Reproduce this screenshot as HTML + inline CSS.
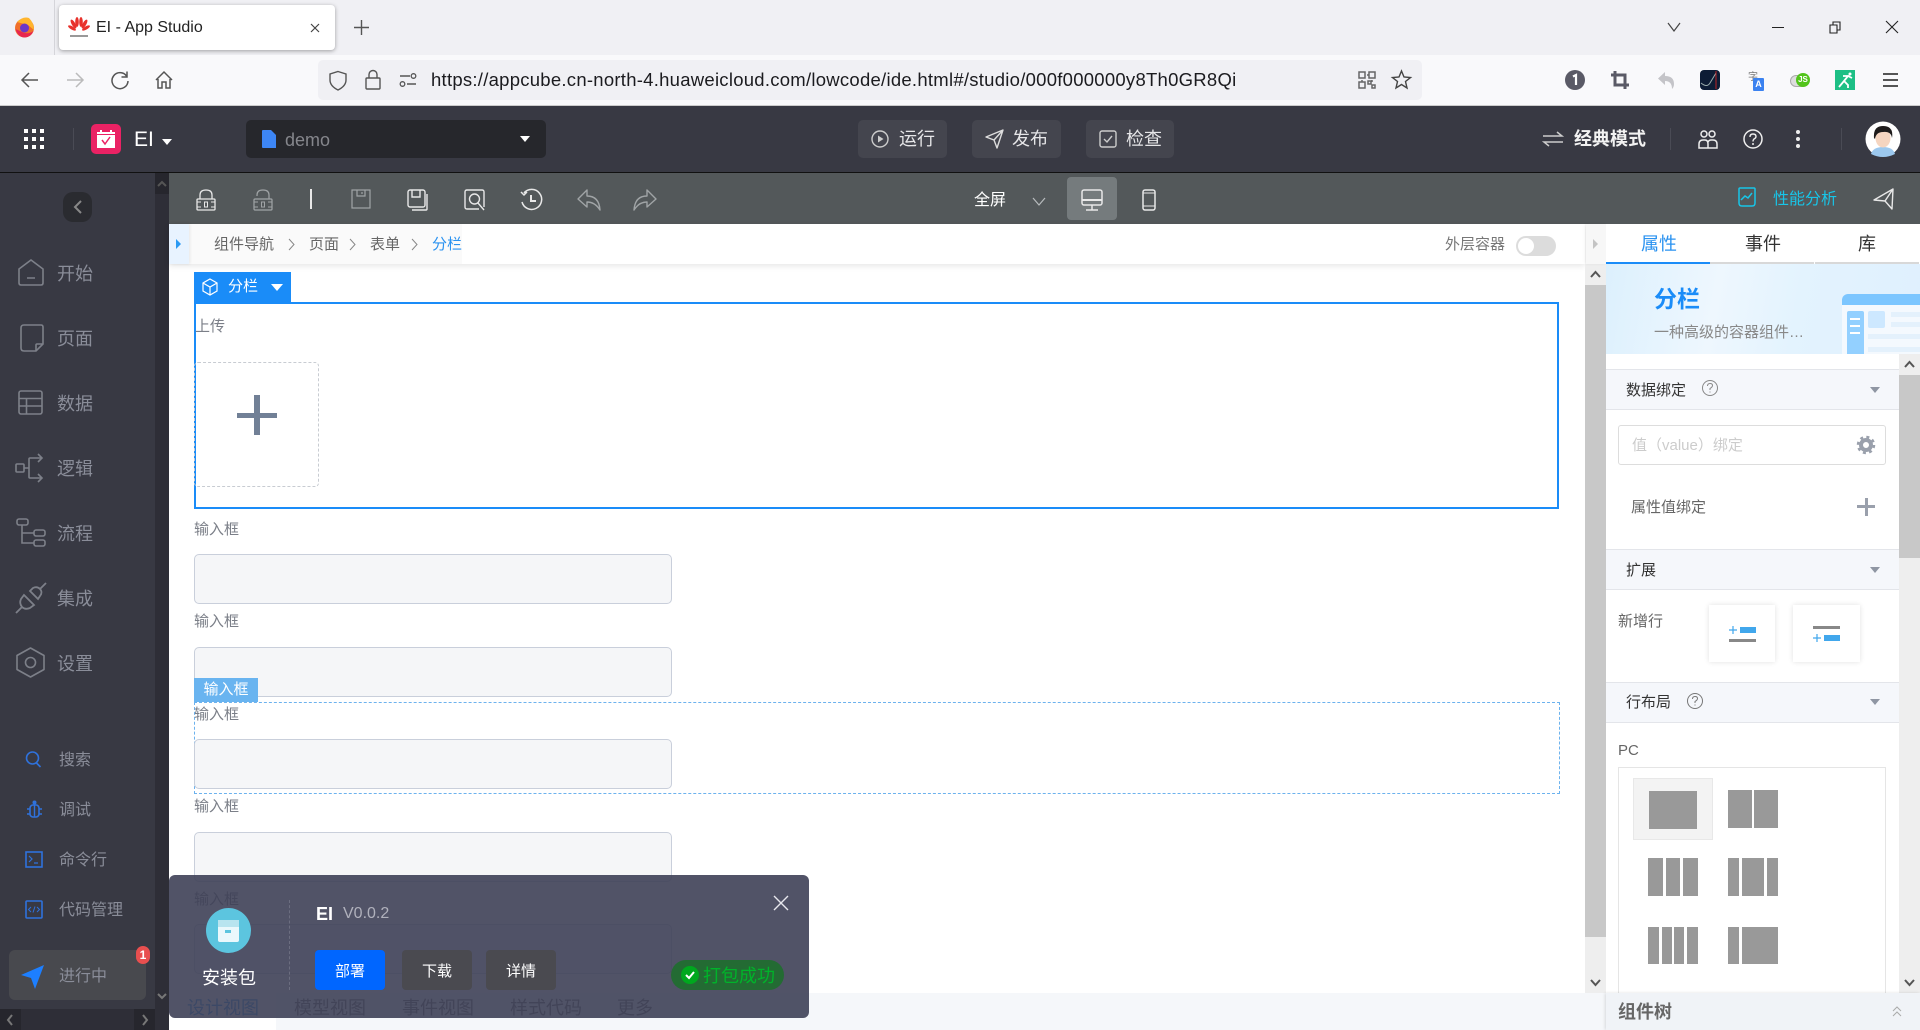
<!DOCTYPE html>
<html lang="zh"><head><meta charset="utf-8"><title>EI - App Studio</title>
<style>
html,body{margin:0;padding:0;width:1920px;height:1030px;overflow:hidden;background:#fff;font-family:"Liberation Sans","Noto Sans CJK SC",sans-serif}
.a{position:absolute}
.t{position:absolute;white-space:nowrap;line-height:20px;font-size:15px;color:#666;margin-top:1px}
svg{position:absolute;overflow:visible;fill:none}
.side{color:#8a8d99;font-size:18px;left:57px;margin-top:0}
.sideb{color:#8a8d99;font-size:16px;left:59px;margin-top:2px}
.hdr{position:absolute;left:1606px;width:293px;height:39px;background:#f5f7fb;border-top:1px solid #e3e5ea;border-bottom:1px solid #e3e5ea}
.tri{position:absolute;width:0;height:0;border-left:5px solid transparent;border-right:5px solid transparent;border-top:6px solid #8f96a3}
.inp{position:absolute;left:194px;width:476px;height:48px;background:#f5f6f8;border:1px solid #c9cfdb;border-radius:5px}
.lab{left:194px;font-size:15px;color:#7b7f88}
.gr{position:absolute;background:#999}
.btn{position:absolute;top:120px;height:38px;background:#44454e;border-radius:5px}
</style></head><body>

<!-- browser tab strip -->
<div class="a" style="left:0;top:0;width:1920px;height:55px;background:#f0f0f4"></div>
<div class="a" style="left:54px;top:0;width:1px;height:55px;background:#d5d5da"></div>
<svg style="left:14px;top:17px" width="21" height="21" viewBox="0 0 21 21"><circle cx="10.5" cy="11" r="9.500" fill="#f0702a"/><path d="M3 5Q9 -1 15 1Q20 6 20 13L14 8Z" fill="#ffb52e"/><circle cx="10.5" cy="11" r="4.500" fill="#6b36c8"/><path d="M1.500 12Q4 20.500 11 20.500Q17 20 19.500 14Q14 18 8 15Z" fill="#e8264f"/></svg>
<div class="a" style="left:59px;top:5px;width:276px;height:45px;background:#fff;border-radius:4px;box-shadow:0 1px 4px rgba(0,0,0,.35)"></div>
<svg style="left:69px;top:17px" width="20" height="21" viewBox="0 0 20 21"><g fill="#e8322c"><ellipse cx="8" cy="5" rx="1.8" ry="5"/><ellipse cx="12" cy="5" rx="1.8" ry="5"/><ellipse cx="4.5" cy="7" rx="1.8" ry="5" transform="rotate(-30 4.5 7)"/><ellipse cx="15.5" cy="7" rx="1.8" ry="5" transform="rotate(30 15.5 7)"/><ellipse cx="3" cy="11" rx="1.6" ry="4.5" transform="rotate(-60 3 11)"/><ellipse cx="17" cy="11" rx="1.6" ry="4.5" transform="rotate(60 17 11)"/></g><rect x="1" y="18" width="18" height="2" fill="#999"/></svg>
<div class="t" style="left:96px;top:17px;font-size:16px;color:#222">EI - App Studio</div>
<svg style="left:309px;top:22px" width="12" height="12" viewBox="0 0 12 12"><path d="M2 2L10 10M10 2L2 10" stroke="#444" stroke-width="1.2"/></svg>
<svg style="left:353px;top:19px" width="17" height="17" viewBox="0 0 17 17"><path d="M8.5 1V16M1 8.5H16" stroke="#555" stroke-width="1.4"/></svg>
<svg style="left:1667px;top:22px" width="14" height="10" viewBox="0 0 14 10"><path d="M1 1L7 9L13 1" stroke="#444" stroke-width="1.2"/></svg>
<div class="a" style="left:1772px;top:27px;width:12px;height:1px;background:#222"></div>
<svg style="left:1829px;top:21px" width="12" height="13" viewBox="0 0 12 13"><path d="M1 4H8V12H1ZM4 4V1H11V9H8" stroke="#222" stroke-width="1.1"/></svg>
<svg style="left:1885px;top:20px" width="14" height="14" viewBox="0 0 14 14"><path d="M1 1L13 13M13 1L1 13" stroke="#222" stroke-width="1.1"/></svg>

<!-- nav bar -->
<div class="a" style="left:0;top:55px;width:1920px;height:50px;background:#f9f9fb;border-bottom:1px solid #ccc"></div>
<svg style="left:20px;top:70px" width="20" height="20" viewBox="0 0 20 20"><path d="M18 10H2M9 3L2 10L9 17" stroke="#555" stroke-width="1.5"/></svg>
<svg style="left:65px;top:70px" width="20" height="20" viewBox="0 0 20 20"><path d="M2 10H18M11 3L18 10L11 17" stroke="#bbb" stroke-width="1.5"/></svg>
<svg style="left:110px;top:70px" width="20" height="20" viewBox="0 0 20 20"><path d="M16.5 6A8 8 0 1 0 18 11M17 1.5V7H11.5" stroke="#555" stroke-width="1.5"/></svg>
<svg style="left:154px;top:70px" width="20" height="20" viewBox="0 0 20 20"><path d="M2 10L10 2L18 10M4 9V18H8V12H12V18H16V9" stroke="#555" stroke-width="1.5"/></svg>
<div class="a" style="left:318px;top:60px;width:1104px;height:40px;background:#f0f0f4;border-radius:5px"></div>
<svg style="left:328px;top:70px" width="20" height="21" viewBox="0 0 20 21"><path d="M10 1.5L18 4V10Q18 16 10 20Q2 16 2 10V4Z" stroke="#555" stroke-width="1.4"/></svg>
<svg style="left:365px;top:69px" width="16" height="21" viewBox="0 0 16 21"><path d="M4 9V5.5A4 4 0 0 1 12 5.5V9M2 9H14Q15 9 15 10V19Q15 20 14 20H2Q1 20 1 19V10Q1 9 2 9Z" stroke="#555" stroke-width="1.4"/></svg>
<svg style="left:399px;top:72px" width="18" height="16" viewBox="0 0 18 16"><path d="M1 4H11M8 12H17" stroke="#555" stroke-width="1.4"/><circle cx="14.5" cy="4" r="2.3" stroke="#555" stroke-width="1.3"/><circle cx="3.5" cy="12" r="2.3" stroke="#555" stroke-width="1.3"/></svg>
<div class="t" id="url" style="left:431px;top:69px;font-size:18.5px;color:#1b1b1f;letter-spacing:.26px">https://appcube.cn-north-4.huaweicloud.com/lowcode/ide.html#/studio/000f000000y8Th0GR8Qi</div>
<svg style="left:1358px;top:71px" width="18" height="18" viewBox="0 0 18 18"><g stroke="#666" stroke-width="1.5"><rect x="1" y="1" width="6" height="6"/><rect x="11" y="1" width="6" height="6"/><rect x="1" y="11" width="6" height="6"/><path d="M10 10h3v3h-3zM14 14h3v3h-3zM9 4h2M4 9v2M14 9v2"/></g></svg>
<svg style="left:1391px;top:69px" width="21" height="21" viewBox="0 0 21 21"><path d="M10.5 2L13 8L19.5 8.5L14.5 12.5L16 19L10.5 15.5L5 19L6.5 12.5L1.5 8.5L8 8Z" stroke="#444" stroke-width="1.4"/></svg>
<svg style="left:1565px;top:70px" width="20" height="20" viewBox="0 0 20 20"><circle cx="10" cy="10" r="10" fill="#5a5a66"/><path d="M8 6.5L11 5V15" stroke="#fff" stroke-width="2.2"/></svg>
<svg style="left:1611px;top:71px" width="18" height="18" viewBox="0 0 18 18"><path d="M4 0V14H18M0 4H14V18" stroke="#5a5a66" stroke-width="3"/></svg>
<svg style="left:1657px;top:71px" width="18" height="19" viewBox="0 0 18 19"><path d="M8 1V5Q17 5 17 13Q17 16 15 18Q15 10 8 10V14L1 7.5Z" fill="#c4c4c8"/></svg>
<div class="a" style="left:1700px;top:70px;width:20px;height:20px;background:#0d1c35;border-radius:4px"></div>
<svg style="left:1700px;top:70px" width="20" height="20" viewBox="0 0 20 20"><path d="M1 13Q7 18 10 13T16 3" stroke="#9aa" stroke-width="1"/><path d="M16 1V19" stroke="#b22" stroke-width="1"/></svg>
<div class="t" style="left:1748px;top:68px;font-size:10px;color:#777;margin-top:0">字</div>
<div class="a" style="left:1753px;top:78px;width:11px;height:13px;background:#3b82f0;border-radius:1px;color:#fff;font-size:9px;line-height:13px;text-align:center;font-weight:700">A</div>
<div class="a" style="left:1790px;top:75px;width:16px;height:10px;background:#ddd;border:1px solid #aaa;border-radius:6px"></div>
<div class="a" style="left:1796px;top:73px;width:14px;height:14px;background:#52c41a;border-radius:50%;color:#fff;font-size:8px;line-height:14px;text-align:center;font-weight:700">JS</div>
<div class="a" style="left:1835px;top:70px;width:20px;height:20px;background:#1dbf85"></div>
<svg style="left:1835px;top:70px" width="20" height="20" viewBox="0 0 20 20"><circle cx="15" cy="4" r="1.500" fill="#fff"/><path d="M4 17L9 11L13 6H8M9 11L13 15V18M13 6L17 8" stroke="#fff" stroke-width="1.800"/></svg>
<div class="a" style="left:1883px;top:73px;width:15px;height:2px;background:#555"></div>
<div class="a" style="left:1883px;top:79px;width:15px;height:2px;background:#555"></div>
<div class="a" style="left:1883px;top:85px;width:15px;height:2px;background:#555"></div>

<!-- app header -->
<div class="a" style="left:0;top:106px;width:1920px;height:66px;background:#383943;border-bottom:1px solid #111"></div>
<svg style="left:24px;top:129px" width="20" height="20" viewBox="0 0 20 20"><g fill="#fff"><rect width="4" height="4"/><rect x="8" width="4" height="4"/><rect x="16" width="4" height="4"/><rect y="8" width="4" height="4"/><rect x="8" y="8" width="4" height="4"/><rect x="16" y="8" width="4" height="4"/><rect y="16" width="4" height="4"/><rect x="8" y="16" width="4" height="4"/><rect x="16" y="16" width="4" height="4"/></g></svg>
<div class="a" style="left:73px;top:128px;width:1px;height:22px;background:#4a4b55"></div>
<div class="a" style="left:91px;top:124px;width:30px;height:30px;background:#ea2264;border-radius:5px"></div>
<svg style="left:97px;top:130px" width="18" height="18" viewBox="0 0 18 18"><rect x="0" y="2" width="18" height="16" fill="#fff"/><path d="M4 0V4M14 0V4" stroke="#fff" stroke-width="2"/><rect y="4" width="18" height="1" fill="#ea2264"/><path d="M5 10L8 14L13 7" stroke="#ea2264" stroke-width="1.5"/></svg>
<div class="t" style="left:134px;top:128px;font-size:21px;color:#fff;line-height:22px">EI</div>
<div class="tri" style="left:162px;top:139px;border-top-color:#fff"></div>
<div class="a" style="left:246px;top:120px;width:300px;height:38px;background:#26272c;border-radius:5px"></div>
<svg style="left:262px;top:130px" width="14" height="18" viewBox="0 0 14 18"><path d="M1 0H9L14 5V18H1Q0 18 0 17V1Q0 0 1 0Z" fill="#3d86f5"/></svg>
<div class="t" style="left:285px;top:129px;font-size:18px;color:#85868c">demo</div>
<div class="tri" style="left:520px;top:136px;border-top-color:#fff"></div>
<div class="btn" style="left:858px;width:89px"></div>
<svg style="left:871px;top:130px" width="18" height="18" viewBox="0 0 18 18"><circle cx="9" cy="9" r="8" stroke="#ccc" stroke-width="1.4"/><path d="M7 5.5L12.5 9L7 12.5Z" fill="#ccc"/></svg>
<div class="t" style="left:899px;top:128px;font-size:18px;color:#e6e6e8">运行</div>
<div class="btn" style="left:972px;width:89px"></div>
<svg style="left:985px;top:129px" width="19" height="20" viewBox="0 0 19 20"><path d="M18 1L1 8L9 11L12 19Z M9 11L18 1" stroke="#ddd" stroke-width="1.4" stroke-linejoin="round"/></svg>
<div class="t" style="left:1012px;top:128px;font-size:18px;color:#e6e6e8">发布</div>
<div class="btn" style="left:1086px;width:88px"></div>
<svg style="left:1099px;top:130px" width="18" height="18" viewBox="0 0 18 18"><rect x="1" y="1" width="16" height="16" rx="2" stroke="#ccc" stroke-width="1.4"/><path d="M5 9L8 12L13 6" stroke="#ccc" stroke-width="1.4"/></svg>
<div class="t" style="left:1126px;top:128px;font-size:18px;color:#e6e6e8">检查</div>
<svg style="left:1543px;top:131px" width="20" height="16" viewBox="0 0 20 16"><path d="M0 5H19L14 1M20 11H1L6 15" stroke="#ccc" stroke-width="1.5" fill="none"/></svg>
<div class="t" style="left:1574px;top:128px;font-size:18px;font-weight:700;color:#f2f2f2">经典模式</div>
<div class="a" style="left:1670px;top:128px;width:1px;height:22px;background:#4a4b55"></div>
<svg style="left:1698px;top:129px" width="20" height="20" viewBox="0 0 20 20"><g stroke="#eee" stroke-width="1.5"><circle cx="6" cy="5" r="3"/><circle cx="14" cy="5" r="3"/><path d="M1 19V15Q1 11 5 11H7Q10 11 10 15V19ZM10 19H19V15Q19 11 15 11H13Q11 11 10 13"/></g></svg>
<svg style="left:1743px;top:129px" width="20" height="20" viewBox="0 0 20 20"><circle cx="10" cy="10" r="9" stroke="#eee" stroke-width="1.5"/><path d="M7 8Q7 5 10 5Q13 5 13 7.5Q13 9 11 10Q10 11 10 12.5" stroke="#eee" stroke-width="1.4"/><circle cx="10" cy="15" r="1" fill="#eee"/></svg>
<svg style="left:1796px;top:130px" width="4" height="18" viewBox="0 0 4 18"><circle cx="2" cy="2" r="2" fill="#eee"/><circle cx="2" cy="9" r="2" fill="#eee"/><circle cx="2" cy="16" r="2" fill="#eee"/></svg>
<div class="a" style="left:1841px;top:128px;width:1px;height:22px;background:#4a4b55"></div>
<svg style="left:1865px;top:121px" width="36" height="36" viewBox="0 0 36 36"><circle cx="18" cy="18" r="17.5" fill="#fff"/><path d="M6 33Q8 26 18 26Q28 26 30 33Q24 36 18 36Q12 36 6 33Z" fill="#9cc8ee"/><ellipse cx="18" cy="17" rx="7.5" ry="9.5" fill="#f5d5c0"/><path d="M9 17Q8 5 18 5Q29 5 27 17Q26 10 18 11Q11 11 10 18Z" fill="#1f1c1c"/></svg>

<!-- left sidebar -->
<div class="a" style="left:0;top:173px;width:155px;height:857px;background:#383943"></div>
<div class="a" style="left:155px;top:173px;width:14px;height:857px;background:#2e2e37"></div>
<div class="a" style="left:155px;top:173px;width:14px;height:21px;background:#26262d"></div>
<svg style="left:157px;top:180px" width="10" height="7" viewBox="0 0 10 7"><path d="M1 6L5 2L9 6" stroke="#555" stroke-width="2"/></svg>
<svg style="left:157px;top:993px" width="10" height="7" viewBox="0 0 10 7"><path d="M1 1L5 5L9 1" stroke="#777" stroke-width="2"/></svg>
<div class="a" style="left:0;top:1009px;width:155px;height:21px;background:#2e2e37"></div>
<div class="a" style="left:0;top:1009px;width:21px;height:21px;background:#26262d"></div>
<div class="a" style="left:134px;top:1009px;width:21px;height:21px;background:#26262d"></div>
<svg style="left:6px;top:1014px" width="8" height="12" viewBox="0 0 8 12"><path d="M6 1L2 6L6 11" stroke="#777" stroke-width="2"/></svg>
<svg style="left:141px;top:1014px" width="8" height="12" viewBox="0 0 8 12"><path d="M2 1L6 6L2 11" stroke="#777" stroke-width="2"/></svg>
<div class="a" style="left:63px;top:192px;width:29px;height:30px;background:#2a2b30;border-radius:10px"></div>
<svg style="left:73px;top:200px" width="10" height="14" viewBox="0 0 10 14"><path d="M8 1L2 7L8 13" stroke="#888" stroke-width="2"/></svg>

<svg style="left:18px;top:259px" width="26" height="27" viewBox="0 0 26 27"><path d="M1 10L13 1L25 10V24Q25 26 23 26H3Q1 26 1 24ZM9 19H17" stroke="#7d8089" stroke-width="1.6"/></svg>
<div class="t side" style="top:264px">开始</div>
<svg style="left:20px;top:324px" width="24" height="28" viewBox="0 0 24 28"><path d="M4 1H21Q23 1 23 3V20L16 27H4Q1 27 1 24V4Q1 1 4 1ZM23 20H17Q16 20 16 21V27" stroke="#7d8089" stroke-width="1.6"/></svg>
<div class="t side" style="top:329px">页面</div>
<svg style="left:18px;top:390px" width="25" height="25" viewBox="0 0 25 25"><rect x="1" y="1" width="23" height="23" rx="2" stroke="#7d8089" stroke-width="1.6"/><path d="M1 8.5H24M1 16H24M8.5 8.5V24" stroke="#7d8089" stroke-width="1.6"/></svg>
<div class="t side" style="top:394px">数据</div>
<svg style="left:15px;top:452px" width="29" height="32" viewBox="0 0 29 32"><rect x="1" y="12" width="8" height="8" rx="1" stroke="#7d8089" stroke-width="1.6"/><path d="M9 16H14V25Q14 26 15 26H27M14 16V7Q14 6 15 6H27M23 2L27 6L23 10M23 22L27 26L23 30" stroke="#7d8089" stroke-width="1.6"/></svg>
<div class="t side" style="top:459px">逻辑</div>
<svg style="left:16px;top:518px" width="30" height="30" viewBox="0 0 30 30"><rect x="1" y="1" width="11" height="6" rx="2" stroke="#7d8089" stroke-width="1.6"/><rect x="18" y="12" width="11" height="6" rx="2" stroke="#7d8089" stroke-width="1.6"/><rect x="18" y="22" width="11" height="6" rx="2" stroke="#7d8089" stroke-width="1.6"/><path d="M6 7V25H18M6 15H18" stroke="#7d8089" stroke-width="1.6"/></svg>
<div class="t side" style="top:524px">流程</div>
<svg style="left:15px;top:582px" width="32" height="32" viewBox="0 0 32 32"><path d="M1 31L7 25M31 1L25 7" stroke="#7d8089" stroke-width="1.8"/><path d="M9 13L19 23L15 26Q10 28 7 25Q4 21 6 17Z" stroke="#7d8089" stroke-width="1.8"/><path d="M15 9L23 17L25 14Q28 10 25 7Q22 4 18 6Z" stroke="#7d8089" stroke-width="1.8"/></svg>
<div class="t side" style="top:589px">集成</div>
<svg style="left:16px;top:647px" width="29" height="31" viewBox="0 0 29 31"><path d="M14.5 1L28 8.5V22.5L14.5 30L1 22.5V8.5Z" stroke="#7d8089" stroke-width="1.6" stroke-linejoin="round"/><circle cx="14.5" cy="15.500" r="5" stroke="#7d8089" stroke-width="1.6"/></svg>
<div class="t side" style="top:654px">设置</div>

<svg style="left:25px;top:751px" width="17" height="17" viewBox="0 0 17 17"><circle cx="7.500" cy="7" r="6" stroke="#2f72dc" stroke-width="1.6"/><path d="M11.500 12L15.500 16" stroke="#2f72dc" stroke-width="1.6"/></svg>
<div class="t sideb" style="top:749px">搜索</div>
<svg style="left:27px;top:800px" width="15" height="18" viewBox="0 0 15 18"><rect x="3" y="5" width="9" height="12" rx="3" stroke="#2f72dc" stroke-width="1.6"/><path d="M7.500 5V17M0 9H3M12 9H15M0 14H3M12 14H15" stroke="#2f72dc" stroke-width="1.4"/><circle cx="7.500" cy="2.500" r="2" fill="#2f72dc"/></svg>
<div class="t sideb" style="top:799px">调试</div>
<svg style="left:25px;top:851px" width="18" height="17" viewBox="0 0 18 17"><rect x="1" y="1" width="16" height="15" stroke="#2f72dc" stroke-width="1.6"/><path d="M4 5L7 8L4 11M9 12H13" stroke="#2f72dc" stroke-width="1.200"/></svg>
<div class="t sideb" style="top:849px">命令行</div>
<svg style="left:25px;top:900px" width="18" height="19" viewBox="0 0 18 19"><rect x="1" y="1" width="16" height="17" rx="1" stroke="#2f72dc" stroke-width="1.6"/><path d="M6 7L3.500 9.500L6 12M12 7L14.500 9.500L12 12M10 6.500L8 12.500" stroke="#2f72dc" stroke-width="1"/></svg>
<div class="t sideb" style="top:899px">代码管理</div>

<div class="a" style="left:9px;top:950px;width:137px;height:50px;background:#48494e;border-radius:6px"></div>
<svg style="left:21px;top:965px" width="24" height="24" viewBox="0 0 24 24"><path d="M23 0L0 10L10 13L14 24Z" fill="#1d7fff"/></svg>
<div class="t sideb" style="top:965px">进行中</div>
<div class="a" style="left:136px;top:946px;width:14px;height:18px;background:#e84f4f;border-radius:9px;color:#fff;font-size:12px;line-height:18px;text-align:center;font-weight:700">1</div>

<!-- toolbar -->
<div class="a" style="left:169px;top:173px;width:1751px;height:51px;background:#53585a"></div>
<svg style="left:196px;top:189px" width="20" height="22" viewBox="0 0 20 22"><path d="M4 10V6Q4 1 10 1Q16 1 16 6V10M2 10H18Q19 10 19 11V20Q19 21 18 21H2Q1 21 1 20V11Q1 10 2 10Z" stroke="#e8e8e8" stroke-width="1.300"/><path d="M1 13H5M1 18H5M15 13H19M15 18H19" stroke="#e8e8e8"/><rect x="8.500" y="13" width="3" height="5" stroke="#e8e8e8"/></svg>
<svg style="left:253px;top:189px" width="20" height="22" viewBox="0 0 20 22"><path d="M4 7V6Q4 1 10 1Q16 1 16 6V10M2 10H18Q19 10 19 11V20Q19 21 18 21H2Q1 21 1 20V11Q1 10 2 10Z" stroke="#a0a4a6" stroke-width="1.200"/><path d="M1 13H5M1 18H5M15 13H19M15 18H19" stroke="#a0a4a6"/><rect x="8.500" y="13" width="3" height="5" stroke="#a0a4a6"/></svg>
<div class="a" style="left:310px;top:189px;width:2px;height:20px;background:#e8e8e8"></div>
<svg style="left:351px;top:189px" width="20" height="20" viewBox="0 0 20 20"><rect x="1" y="1" width="18" height="18" stroke="#a0a4a6" stroke-width="1.200"/><path d="M6 1V7H14V1M11 3V5" stroke="#a0a4a6" stroke-width="1.200"/></svg>
<svg style="left:407px;top:189px" width="21" height="22" viewBox="0 0 21 22"><rect x="1" y="1" width="17" height="17" rx="2" stroke="#e8e8e8" stroke-width="1.400"/><path d="M5 1V8H13V1M20 5V20Q20 21 19 21H5" stroke="#e8e8e8" stroke-width="1.400"/></svg>
<svg style="left:464px;top:189px" width="22" height="22" viewBox="0 0 22 22"><path d="M20 18V3Q20 1 18 1H3Q1 1 1 3V18Q1 20 3 20H15" stroke="#e8e8e8" stroke-width="1.400"/><circle cx="10.500" cy="10" r="5" stroke="#e8e8e8" stroke-width="1.400"/><path d="M14 14L20 21" stroke="#e8e8e8" stroke-width="1.400"/></svg>
<svg style="left:520px;top:189px" width="22" height="22" viewBox="0 0 22 22"><path d="M4 4A10 10 0 1 1 2 13M1 3L4 6L7 3" stroke="#e8e8e8" stroke-width="1.500"/><path d="M11 6V12H16" stroke="#e8e8e8" stroke-width="2"/></svg>
<svg style="left:577px;top:189px" width="24" height="22" viewBox="0 0 24 22"><path d="M10 1L1 10L10 18V13Q18 13 23 21Q22 7 10 7Z" stroke="#a0a4a6" stroke-width="1.400" stroke-linejoin="round"/></svg>
<svg style="left:633px;top:189px" width="24" height="22" viewBox="0 0 24 22"><path d="M14 1L23 10L14 18V13Q6 13 1 21Q2 7 14 7Z" stroke="#a0a4a6" stroke-width="1.400" stroke-linejoin="round"/></svg>
<div class="t" style="left:974px;top:189px;font-size:16px;color:#fff;margin-top:2px">全屏</div>
<svg style="left:1032px;top:197px" width="14" height="9" viewBox="0 0 14 9"><path d="M1 1L7 8L13 1" stroke="#b8bcbe" stroke-width="1.200"/></svg>
<div class="a" style="left:1067px;top:177px;width:50px;height:43px;background:#757b7d;border-radius:4px"></div>
<svg style="left:1081px;top:189px" width="22" height="22" viewBox="0 0 22 22"><rect x="1" y="1" width="20" height="15" rx="2" stroke="#e8e8e8" stroke-width="1.500"/><rect x="1" y="10" width="20" height="2" fill="#e8e8e8"/><path d="M11 16V21M5 21H17" stroke="#e8e8e8" stroke-width="1.500"/></svg>
<svg style="left:1142px;top:189px" width="14" height="22" viewBox="0 0 14 22"><rect x="1" y="1" width="12" height="20" rx="2" stroke="#e8e8e8" stroke-width="1.500"/><path d="M1 4H13M1 17H13" stroke="#e8e8e8"/></svg>
<svg style="left:1738px;top:187px" width="18" height="20" viewBox="0 0 18 20"><path d="M2 1H16Q17 1 17 2V16Q17 19 14 19H4Q1 19 1 16V2Q1 1 2 1Z" stroke="#18c5e8" stroke-width="1.500"/><path d="M3 13L7 9L10 11L14 6" stroke="#18c5e8" stroke-width="1.500"/></svg>
<div class="t" style="left:1773px;top:189px;font-size:16px;color:#18c5e8">性能分析</div>
<svg style="left:1873px;top:188px" width="21" height="22" viewBox="0 0 21 22"><path d="M20 1L1 12L12 13L19 21ZM12 13L20 1" stroke="#e8e8e8" stroke-width="1.400" stroke-linejoin="round"/></svg>

<!-- breadcrumb -->
<div class="a" style="left:169px;top:224px;width:1416px;height:40px;background:#fff;box-shadow:0 2px 6px rgba(0,0,0,.1)"></div>
<div class="a" style="left:189px;top:224px;width:273px;height:40px;background:#fafafa"></div>
<div class="a" style="left:169px;top:224px;width:20px;height:40px;background:#e8f3ff;box-shadow:1px 0 3px rgba(0,0,0,.08)"></div>
<div class="a" style="left:176px;top:239px;border-left:5px solid #2b9af3;border-top:5px solid transparent;border-bottom:5px solid transparent"></div>
<div class="t" style="left:214px;top:234px;color:#666">组件导航</div>
<svg style="left:288px;top:238px" width="7" height="13" viewBox="0 0 7 13"><path d="M1 1L6 6.500L1 12" stroke="#888"/></svg>
<div class="t" style="left:309px;top:234px;color:#666">页面</div>
<svg style="left:349px;top:238px" width="7" height="13" viewBox="0 0 7 13"><path d="M1 1L6 6.500L1 12" stroke="#888"/></svg>
<div class="t" style="left:370px;top:234px;color:#666">表单</div>
<svg style="left:411px;top:238px" width="7" height="13" viewBox="0 0 7 13"><path d="M1 1L6 6.500L1 12" stroke="#888"/></svg>
<div class="t" style="left:432px;top:234px;color:#2a92f0">分栏</div>
<div class="t" style="left:1445px;top:234px;color:#777">外层容器</div>
<div class="a" style="left:1516px;top:236px;width:40px;height:20px;background:#dcdcdc;border-radius:10px"></div>
<div class="a" style="left:1518px;top:238px;width:16px;height:16px;background:#fff;border-radius:50%"></div>

<!-- canvas -->
<div class="a" style="left:194px;top:272px;width:97px;height:31px;background:#1a8cf8"></div>
<svg style="left:202px;top:278px" width="16" height="18" viewBox="0 0 16 18"><path d="M8 1L15 5V13L8 17L1 13V5ZM1 5L8 9L15 5M8 9V17" stroke="#fff" stroke-width="1.200"/></svg>
<div class="t" style="left:228px;top:276px;color:#fff">分栏</div>
<div class="tri" style="left:271px;top:284px;border-left-width:6px;border-right-width:6px;border-top:7px solid #fff"></div>
<div class="a" style="left:194px;top:302px;width:1361px;height:203px;border:2px solid #1a8cf8"></div>
<div class="t lab" style="left:195px;top:316px">上传</div>
<div class="a" style="left:194px;top:362px;width:123px;height:123px;border:1px dashed #c8ccd2;border-radius:4px"></div>
<div class="a" style="left:237px;top:413px;width:40px;height:5px;background:#718096"></div>
<div class="a" style="left:254px;top:395px;width:6px;height:40px;background:#718096"></div>

<div class="t lab" style="top:519px">输入框</div>
<div class="inp" style="top:554px"></div>
<div class="t lab" style="top:611px">输入框</div>
<div class="inp" style="top:647px"></div>
<div class="a" style="left:194px;top:702px;width:1364px;height:90px;border:1px dashed #6cb2ee"></div>
<div class="a" style="left:194px;top:678px;width:64px;height:24px;background:#69b4f0;color:#fff;font-size:15px;line-height:24px;text-align:center">输入框</div>
<div class="t lab" style="top:704px">输入框</div>
<div class="inp" style="top:739px"></div>
<div class="t lab" style="top:796px">输入框</div>
<div class="inp" style="top:832px"></div>
<div class="t lab" style="top:889px">输入框</div>
<div class="inp" style="top:924px"></div>

<!-- center scrollbar -->
<div class="a" style="left:1585px;top:264px;width:21px;height:729px;background:#eee"></div>
<div class="a" style="left:1585px;top:285px;width:21px;height:652px;background:#c8c8c8"></div>
<svg style="left:1590px;top:270px" width="11" height="8" viewBox="0 0 11 8"><path d="M1 7L5.500 2L10 7" stroke="#555" stroke-width="2"/></svg>
<svg style="left:1590px;top:979px" width="11" height="8" viewBox="0 0 11 8"><path d="M1 1L5.500 6L10 1" stroke="#555" stroke-width="2"/></svg>
<div class="a" style="left:1586px;top:224px;width:20px;height:40px;background:#f7f7f7;box-shadow:-1px 0 3px rgba(0,0,0,.06)"></div>
<div class="a" style="left:1593px;top:239px;border-left:5px solid #c4c4c4;border-top:5px solid transparent;border-bottom:5px solid transparent"></div>

<!-- right panel -->
<div class="a" style="left:1606px;top:224px;width:314px;height:806px;background:#fff"></div>
<div class="t" style="left:1641px;top:233px;font-size:18px;color:#2a92f0">属性</div>
<div class="t" style="left:1745px;top:233px;font-size:18px;color:#333">事件</div>
<div class="t" style="left:1858px;top:233px;font-size:18px;color:#333">库</div>
<div class="a" style="left:1606px;top:262px;width:104px;height:2px;background:#1a8cf8"></div>
<div class="a" style="left:1710px;top:262px;width:104px;height:2px;background:#d8d8d8"></div>
<div class="a" style="left:1815px;top:262px;width:104px;height:2px;background:#d8d8d8"></div>
<div class="a" style="left:1606px;top:264px;width:314px;height:90px;overflow:hidden;background:linear-gradient(100deg,#dcf0fd 0%,#eef7fe 35%,#e3f3fe 60%,#dff0fe 100%)">
  <div class="a" style="left:236px;top:30px;width:90px;height:80px;background:#f4f9fe;border-radius:6px 6px 0 0"></div>
  <div class="a" style="left:236px;top:30px;width:90px;height:11px;background:#7cc6ff;border-radius:6px 0 0 0"></div>
  <div class="a" style="left:241px;top:47px;width:17px;height:50px;background:#93d0ff;border-radius:2px"></div>
  <div class="a" style="left:244px;top:54px;width:10px;height:2px;background:#fff"></div>
  <div class="a" style="left:244px;top:61px;width:10px;height:2px;background:#fff"></div>
  <div class="a" style="left:244px;top:68px;width:10px;height:2px;background:#fff"></div>
  <div class="a" style="left:262px;top:47px;width:17px;height:17px;background:#cde8ff;border-radius:2px"></div>
  <div class="a" style="left:285px;top:48px;width:30px;height:5px;background:#e4f1fc"></div>
  <div class="a" style="left:285px;top:58px;width:30px;height:5px;background:#e4f1fc"></div>
  <div class="a" style="left:262px;top:70px;width:60px;height:5px;background:#e4f1fc"></div>
  <div class="a" style="left:262px;top:83px;width:60px;height:5px;background:#e4f1fc"></div>
</div>
<div class="t" style="left:1654px;top:286px;font-size:23px;font-weight:700;color:#1a8cf8;line-height:24px">分栏</div>
<div class="t" style="left:1654px;top:322px;font-size:15px;color:#888">一种高级的容器组件…</div>

<div class="a" style="left:1899px;top:354px;width:21px;height:639px;background:#eee"></div>
<div class="a" style="left:1899px;top:375px;width:21px;height:183px;background:#c8c8c8"></div>
<svg style="left:1904px;top:360px" width="11" height="8" viewBox="0 0 11 8"><path d="M1 7L5.500 2L10 7" stroke="#555" stroke-width="2"/></svg>
<svg style="left:1904px;top:979px" width="11" height="8" viewBox="0 0 11 8"><path d="M1 1L5.500 6L10 1" stroke="#555" stroke-width="2"/></svg>

<div class="hdr" style="top:369px"></div>
<div class="t" style="left:1626px;top:380px;color:#333">数据绑定</div>
<svg style="left:1702px;top:380px" width="16" height="16" viewBox="0 0 16 16"><circle cx="8" cy="8" r="7.500" stroke="#888"/><path d="M5.500 6Q5.500 3.500 8 3.500Q10.500 3.500 10.500 5.500Q10.500 7 8 8.500V10M8 11.500V12.500" stroke="#888"/></svg>
<div class="tri" style="left:1870px;top:387px"></div>
<div class="a" style="left:1618px;top:425px;width:266px;height:38px;border:1px solid #ddd;border-radius:3px;background:#fff"></div>
<div class="t" style="left:1632px;top:435px;color:#ccc">值（value）绑定</div>
<svg style="left:1857px;top:436px" width="18" height="18" viewBox="0 0 18 18"><circle cx="9" cy="9" r="5" stroke="#9aa0ac" stroke-width="4"/><circle cx="9" cy="9" r="8" stroke="#9aa0ac" stroke-width="2.500" stroke-dasharray="3 3.300"/></svg>
<div class="t" style="left:1631px;top:497px;color:#666">属性值绑定</div>
<div class="a" style="left:1857px;top:505px;width:18px;height:3px;background:#9aa0ac"></div>
<div class="a" style="left:1865px;top:498px;width:3px;height:18px;background:#9aa0ac"></div>
<div class="hdr" style="top:549px"></div>
<div class="t" style="left:1626px;top:560px;color:#333">扩展</div>
<div class="tri" style="left:1870px;top:567px"></div>
<div class="t" style="left:1618px;top:611px;color:#666">新增行</div>
<div class="a" style="left:1709px;top:605px;width:66px;height:57px;background:#fff;box-shadow:0 0 5px rgba(0,0,0,.12)"></div>
<div class="a" style="left:1793px;top:605px;width:67px;height:57px;background:#fff;box-shadow:0 0 5px rgba(0,0,0,.12)"></div>
<svg style="left:1729px;top:625px" width="27" height="18" viewBox="0 0 27 18"><path d="M0 5H8M4 1V9" stroke="#41a7ec" stroke-width="1.200"/><rect x="11" y="2" width="16" height="6" fill="#41a7ec"/><rect y="14" width="27" height="3" fill="#888"/></svg>
<svg style="left:1813px;top:625px" width="27" height="18" viewBox="0 0 27 18"><rect y="1" width="27" height="3" fill="#888"/><path d="M0 13H8M4 9V17" stroke="#41a7ec" stroke-width="1.200"/><rect x="11" y="10" width="16" height="6" fill="#41a7ec"/></svg>
<div class="hdr" style="top:682px"></div>
<div class="t" style="left:1626px;top:692px;color:#333">行布局</div>
<svg style="left:1687px;top:693px" width="16" height="16" viewBox="0 0 16 16"><circle cx="8" cy="8" r="7.500" stroke="#777"/><path d="M5.500 6Q5.500 3.500 8 3.500Q10.500 3.500 10.500 5.500Q10.500 7 8 8.500V10M8 11.500V12.500" stroke="#777"/></svg>
<div class="tri" style="left:1870px;top:699px"></div>
<div class="t" style="left:1618px;top:740px;color:#666">PC</div>
<div class="a" style="left:1618px;top:767px;width:266px;height:240px;border:1px solid #e5e5e5"></div>
<div class="a" style="left:1633px;top:778px;width:78px;height:60px;background:#f3f3f3;border:1px solid #e8e8e8"></div>
<div class="gr" style="left:1649px;top:791px;width:48px;height:38px"></div>
<div class="gr" style="left:1728px;top:790px;width:24px;height:38px"></div>
<div class="gr" style="left:1754px;top:790px;width:24px;height:38px"></div>
<div class="gr" style="left:1648px;top:858px;width:15px;height:38px"></div>
<div class="gr" style="left:1666px;top:858px;width:14px;height:38px"></div>
<div class="gr" style="left:1683px;top:858px;width:15px;height:38px"></div>
<div class="gr" style="left:1728px;top:858px;width:11px;height:38px"></div>
<div class="gr" style="left:1742px;top:858px;width:22px;height:38px"></div>
<div class="gr" style="left:1767px;top:858px;width:11px;height:38px"></div>
<div class="gr" style="left:1648px;top:927px;width:11px;height:37px"></div>
<div class="gr" style="left:1662px;top:927px;width:10px;height:37px"></div>
<div class="gr" style="left:1674px;top:927px;width:10px;height:37px"></div>
<div class="gr" style="left:1687px;top:927px;width:11px;height:37px"></div>
<div class="gr" style="left:1728px;top:927px;width:11px;height:37px"></div>
<div class="gr" style="left:1742px;top:927px;width:36px;height:37px"></div>

<!-- bottom bars -->
<div class="a" style="left:276px;top:993px;width:1330px;height:37px;background:#f5f7fa"></div>
<div class="a" style="left:1606px;top:993px;width:314px;height:37px;background:#f0f3f7;box-shadow:-1px 0 3px rgba(0,0,0,.12)"></div>
<div class="t" style="left:1618px;top:1001px;font-size:18px;font-weight:700;color:#666">组件树</div>
<svg style="left:1891px;top:1006px" width="12" height="11" viewBox="0 0 12 11"><path d="M2 5L6 1L10 5M2 10L6 6L10 10" stroke="#aaa"/></svg>
<div class="t" style="left:187px;top:997px;font-size:18px;color:#2a92f0">设计视图</div>
<div class="t" style="left:294px;top:997px;font-size:18px;color:#666">模型视图</div>
<div class="t" style="left:402px;top:997px;font-size:18px;color:#666">事件视图</div>
<div class="t" style="left:510px;top:997px;font-size:18px;color:#666">样式代码</div>
<div class="t" style="left:617px;top:997px;font-size:18px;color:#666">更多</div>

<!-- popup -->
<div class="a" style="left:169px;top:875px;width:640px;height:143px;background:rgba(62,64,86,.9);border-radius:6px"></div>
<svg style="left:206px;top:908px" width="45" height="45" viewBox="0 0 45 45"><circle cx="22.500" cy="22.500" r="22.500" fill="#5cc5df"/><rect x="12" y="12" width="21" height="22" rx="2" fill="#eaf8fc"/><rect x="12" y="12" width="21" height="7" fill="#b8e4ef"/><rect x="19" y="22" width="6" height="3" fill="#5cc5df"/></svg>
<div class="t" style="left:202px;top:967px;font-size:18px;color:#fff">安装包</div>
<div class="a" style="left:289px;top:900px;width:0;height:90px;border-left:1px dashed #6c6e80"></div>
<div class="t" style="left:316px;top:903px;font-size:18px;font-weight:700;color:#fff">EI</div>
<div class="t" style="left:343px;top:903px;font-size:16px;color:#b0b1bc">V0.0.2</div>
<div class="a" style="left:315px;top:950px;width:70px;height:40px;background:#0066ff;border-radius:4px;color:#fff;font-size:15px;line-height:43px;text-align:center">部署</div>
<div class="a" style="left:402px;top:950px;width:70px;height:40px;background:#4a4a50;border-radius:4px;color:#fff;font-size:15px;line-height:43px;text-align:center">下载</div>
<div class="a" style="left:486px;top:950px;width:70px;height:40px;background:#4a4a50;border-radius:4px;color:#fff;font-size:15px;line-height:43px;text-align:center">详情</div>
<svg style="left:773px;top:895px" width="16" height="16" viewBox="0 0 16 16"><path d="M1 1L15 15M15 1L1 15" stroke="#e8e8ee" stroke-width="1.400"/></svg>
<div class="a" style="left:671px;top:960px;width:113px;height:30px;background:#236b33;border-radius:15px"></div>
<svg style="left:681px;top:966px" width="18" height="18" viewBox="0 0 18 18"><circle cx="9" cy="9" r="9" fill="#00a81e"/><path d="M5 9L8 12L13 6" stroke="#fff" stroke-width="2"/></svg>
<div class="t" style="left:703px;top:965px;font-size:18px;color:#00b32a">打包成功</div>

</body></html>
